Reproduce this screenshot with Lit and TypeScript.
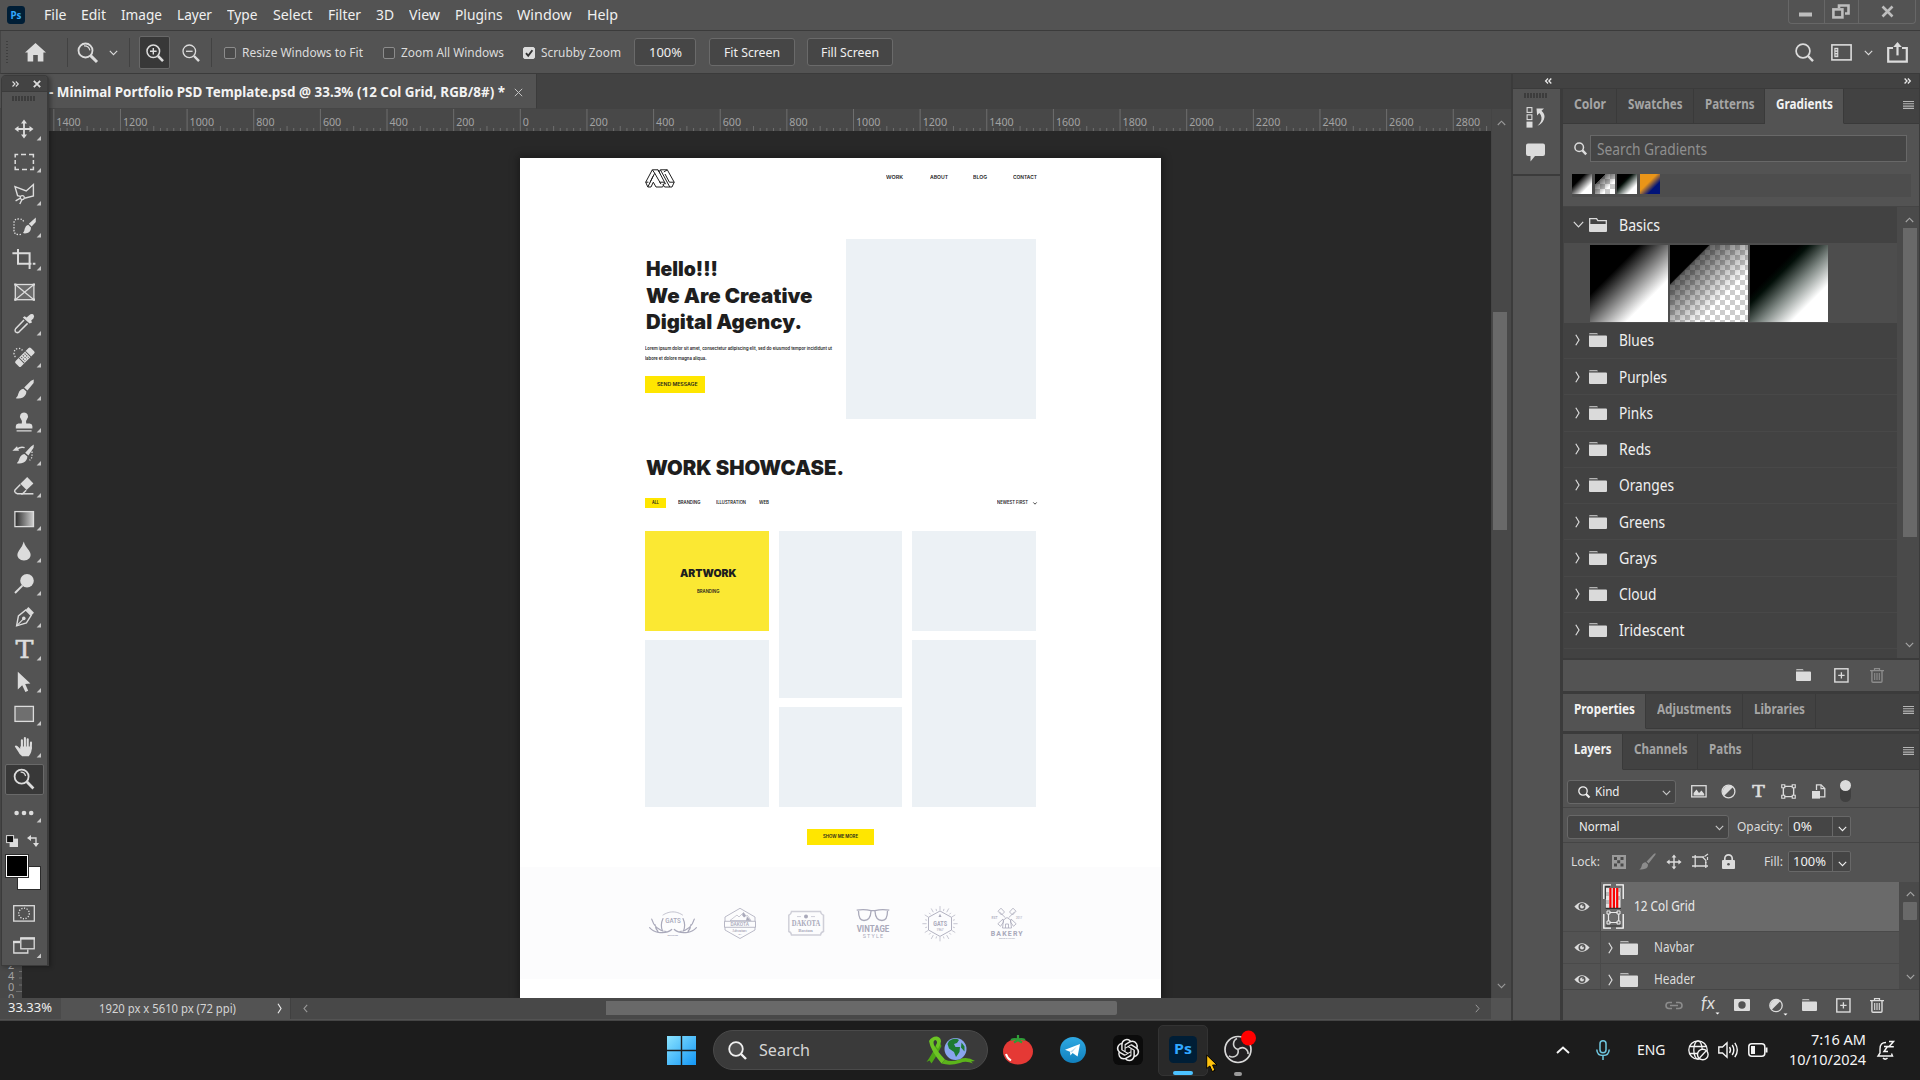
import { LitElement, html, css, svg } from "lit";
import { customElement, property } from "lit/decorators.js";

/* ---------- helpers ---------- */

const ico = (w: number, h: number, body: unknown, cls = "") =>
  html`<svg class=${cls} width=${w} height=${h} viewBox="0 0 ${w} ${h}" fill="none" stroke="currentColor">${body}</svg>`;

const t = (w: number, s: string, cls = "") =>
  html`<fit-text class=${cls} .w=${w}>${s}</fit-text>`;

const base = css`
  :host { display: block; box-sizing: border-box; font-family: "Noto Sans", "Open Sans", sans-serif; line-height: 1; color: #e8e8e8; }
  * { box-sizing: border-box; }
  svg { display: block; flex: none; overflow: visible; }
  .b { font-weight: 700; }
`;

/* Text squeezed or stretched to an exact width. */
@customElement("fit-text")
export class FitText extends LitElement {
  @property({ type: Number }) w = 0;
  static styles = css`
    :host { display: block; white-space: nowrap; flex: none; line-height: 1.3; }
    span { display: inline-block; transform-origin: 0 50%; vertical-align: top; }
  `;
  updated() {
    const s = this.renderRoot.querySelector("span") as HTMLElement;
    s.style.transform = "none";
    const n = s.getBoundingClientRect().width;
    this.style.width = `${this.w}px`;
    if (n > 0) s.style.transform = `scaleX(${this.w / n})`;
  }
  render() {
    return html`<span><slot></slot></span>`;
  }
}

/* ---------- shared icons ---------- */

const chevDown = () => ico(9, 6, svg`<path d="M.8 .8L4.5 4.6 8.2 .8" stroke-width="1.1"/>`);
const chevUp = () => ico(9, 6, svg`<path d="M.8 5L4.5 1.2 8.2 5" stroke-width="1.1"/>`);
const chevRight = () => ico(5, 12, svg`<path d="M.8 .8L4 6 .8 11.2" stroke-width="1.2"/>`);
const chevLeft = () => ico(5, 9, svg`<path d="M4.2 .8L1 4.5 4.2 8.2" stroke-width="1.1"/>`);
const folder = (w = 18, h = 14) =>
  ico(w, h, svg`<path d="M0 1.2Q0 .2 1 .2H${w * 0.45}l1 1H0z M0 ${2.6}H${w - 1}q1 0 1 1V${h - 1}q0 1-1 1H1q-1 0-1-1z" fill="currentColor" stroke="none"/>`);
const menuIcon = () => ico(11, 8, svg`<path d="M0 .5H11M0 2.8H11M0 5.1H11M0 7.4H11" stroke-width="1.1"/>`, "menu");
const plusBox = () => ico(15, 15, svg`<rect x=".8" y=".8" width="13.2" height="13.2" stroke-width="1.4"/><path d="M7.4 4.2v6.4M4.2 7.4h6.4" stroke-width="1.3"/>`);
const trash = (cls = "") => ico(14, 15, svg`<path d="M0 2.6H14M4.5 2.4V.7H9.5V2.4" stroke-width="1.2"/><path d="M1.9 3V13.2q0 1 1 1H11q1 0 1-1V3" stroke-width="1.4"/><path d="M4.7 5v7M7 5v7M9.3 5v7" stroke-width="1.1"/>`, cls);
const half = () => ico(15, 15, svg`<circle cx="7.5" cy="7.5" r="6.4" stroke-width="1.3"/><path d="M12 3A6.4 6.4 0 0 0 3 12z" fill="currentColor" stroke="none"/>`);
const moveIcon = (s: number) => html`<svg width=${s} height=${s} viewBox="2 2 20 20"><path fill="currentColor" stroke="none" d="M12 2.5l3 4h-2.1v4.6h4.6V9l4 3-4 3v-2.1h-4.6v4.6H15l-3 4-3-4h2.1v-4.6H6.5V15l-4-3 4-3v2.1h4.6V6.5H9z"/></svg>`;
const frameIcon = (s: number) => html`<svg width=${s} height=${s} viewBox="0 0 14 14" fill="none" stroke="currentColor"><path d="M2.2 3.6v6.8M11.8 3.6v6.8M3.6 2.2h6.8M3.6 11.8h6.8" stroke-width="1.3"/><path stroke-width="1.1" d="M.7.7h2.8v2.8H.7zM10.5.7h2.8v2.8h-2.8zM.7 10.5h2.8v2.8H.7zM10.5 10.5h2.8v2.8h-2.8z"/></svg>`;
const smallBrush = () => ico(17, 17, svg`<path d="M16.4.2Q17 .8 16.2 2L9.6 10.6 7.6 8.6 14.8 1Q15.8 0 16.4.2z M6.8 9.2l2.2 2.2Q9.2 14.6 6 15.8 3.4 16.8.4 16.4 2.6 15 2.8 12.6 3.2 9.6 6.8 9.2z" fill="currentColor" stroke="none"/>`);

/* ---------- menu bar ---------- */

@customElement("menu-bar")
export class MenuBar extends LitElement {
  static styles = [base, css`
    :host { display: flex; height: 31px; background: #535353; border-bottom: 1px solid #3b3b3b; align-items: flex-start; justify-content: space-between; padding-left: 7px; }
    .left { display: flex; align-items: center; height: 30px; font-size: 15px; }
    .items { display: flex; gap: 15.1px; margin-left: 18.5px; color: #f0f0f0; }
    .win { display: grid; grid-template-columns: 35px 34px 59px; width: 128px; height: 24px; margin-right: 4px; border: 1px solid #676767; border-top: 0; border-radius: 0 0 4px 4px; color: #bdbdbd; }
    .win > div { display: flex; align-items: center; justify-content: center; border-left: 1px solid #676767; }
    .win > div:first-child { border-left: 0; }
    .win svg { margin-left: -2px; }
  `];
  render() {
    const items: [string, number][] = [["File", 22.5], ["Edit", 25], ["Image", 41], ["Layer", 35], ["Type", 30.5], ["Select", 39.5], ["Filter", 33], ["3D", 18], ["View", 31], ["Plugins", 47.5], ["Window", 54.5], ["Help", 31]];
    return html`
      <div class="left">
        ${ico(18, 18, svg`<rect width="18" height="18" rx="3.4" fill="#001e36" stroke="none"/><text x="9" y="12.6" text-anchor="middle" font-size="10" font-weight="700" textLength="11" lengthAdjust="spacingAndGlyphs" fill="#31a8ff" stroke="none">Ps</text>`)}
        <div class="items">${items.map(([s, w]) => t(w, s))}</div>
      </div>
      <div class="win">
        <div>${ico(13, 4, svg`<rect width="13" height="4" fill="currentColor" stroke="none" y="2.5"/>`)}</div>
        <div>${ico(18, 15, svg`<path d="M7 4V1.5H16.5V9.5H13" stroke-width="2.6"/><rect x="1.4" y="5.4" width="9" height="8" stroke-width="2.6"/>`)}</div>
        <div>${ico(13, 11, svg`<path d="M1.5 .5L11.5 10.5M11.5 .5L1.5 10.5" stroke-width="2.6"/>`)}</div>
      </div>`;
  }
}

/* ---------- options bar ---------- */

@customElement("options-bar")
export class OptionsBar extends LitElement {
  static styles = [base, css`
    :host { display: flex; justify-content: space-between; height: 43px; background: #535353; border-bottom: 1px solid #3b3b3b; border-left: 1px solid #454545; font-size: 13px; color: #dcdcdc; }
    .row { display: grid; align-items: center; justify-items: start; height: 42px; padding-top: 1px; }
    .l { padding-left: 5px; grid-template-columns: 19px 42px 10px 32px 20px 11px 42px 29px 13px 18px 141px 18px 122px 18px 93px 75px 98px 90px; }
    .r { grid-template-columns: 36px 33px 23px 33px; }
    .grip { width: 2px; height: 24px; background: repeating-linear-gradient(#3f3f3f 0 1px, #535353 1px 3px); }
    .sep { width: 1px; height: 29px; background: #424242; }
    .on { width: 31px; height: 33px; margin-left: -1px; background: #383838; border: 1px solid #686868; border-radius: 2px; display: flex; align-items: center; justify-content: center; }
    .cb { width: 12px; height: 12px; border: 1px solid #8c8c8c; border-radius: 2px; background: #4a4a4a; }
    .cb.c { background: #dcdcdc; border-color: #dcdcdc; color: #333; }
    .btn { height: 28px; border: 1px solid #6a6a6a; border-radius: 3px; background: #464646; display: flex; align-items: center; justify-content: center; color: #f0f0f0; margin-top: -1px; }
    .w1 { width: 62px; } .w2 { width: 86px; } .w3 { width: 86px; }
  `];
  render() {
    return html`
      <div class="row l">
        <div class="grip"></div>
        ${ico(21, 19, svg`<path d="M10.5 0L21 9.6H18.4V18.4H12.8V12H8.2V18.4H2.6V9.6H0z" fill="currentColor" stroke="none"/>`)}
        <div class="sep"></div>
        ${ico(21, 21, svg`<circle cx="8.5" cy="8.5" r="7" stroke-width="1.8"/><path d="M13.6 13.6L20 20" stroke-width="3"/><path d="M7 3.9Q11.8 3.6 12.9 8.3" stroke-width="1.2"/>`)}
        ${chevDown()}
        <div class="sep"></div>
        <div class="on">${ico(18, 18, svg`<circle cx="7.3" cy="7.3" r="6.3" stroke-width="1.5"/><path d="M12 12L17 17.2" stroke-width="2.6"/><path d="M7.3 4v6.6M4 7.3h6.6" stroke-width="1.4"/>`)}</div>
        ${ico(18, 18, svg`<circle cx="7.3" cy="7.3" r="6.3" stroke-width="1.3"/><path d="M12 12L17 17.2" stroke-width="2.4"/><path d="M4 7.3h6.6" stroke-width="1.3"/>`)}
        <div class="sep"></div>
        <div class="cb"></div>${t(121, "Resize Windows to Fit")}
        <div class="cb"></div>${t(103, "Zoom All Windows")}
        <div class="cb c">${ico(10, 10, svg`<path d="M2 5.2L4.2 7.8 8.4 2.2" stroke-width="1.9"/>`)}</div>${t(80, "Scrubby Zoom")}
        <div class="btn w1">${t(33, "100%")}</div>
        <div class="btn w2">${t(56, "Fit Screen")}</div>
        <div class="btn w3">${t(58, "Fill Screen")}</div>
      </div>
      <div class="row r">
        ${ico(19, 19, svg`<circle cx="8" cy="8" r="6.9" stroke-width="1.7"/><path d="M13 13L18 18.2" stroke-width="2.4"/>`)}
        ${ico(21, 17, svg`<rect x=".9" y=".9" width="19.2" height="15" stroke-width="1.6"/><rect x="3.3" y="3.8" width="4" height="9.4" fill="currentColor" stroke="none"/><path d="M4.4 5.8h1.8M4.4 8.4h1.8M4.4 11h1.8" stroke="#535353"/>`)}
        ${chevDown()}
        ${ico(21, 21, svg`<path d="M6 6H1.2V19.6H19.8V6H15" stroke-width="2.2"/><path d="M10.5 13.4V4" stroke-width="2.2"/><path d="M10.5 0L14.8 5H6.2z" fill="currentColor" stroke="none"/>`)}
      </div>`;
  }
}

/* ---------- floating toolbox ---------- */

const fillP = (d: string) => svg`<path d=${d} fill="currentColor" stroke="none"/>`;
const tools: unknown[] = [
  fillP("M12 2.5l3 4h-2.1v4.6h4.6V9l4 3-4 3v-2.1h-4.6v4.6H15l-3 4-3-4h2.1v-4.6H6.5V15l-4-3 4-3v2.1h4.6V6.5H9z"),
  svg`<path d="M3.2 7.5V4.5H6.2M9 4.5h5M17 4.5h4.4V7.5M21.4 10v4M21.4 16.5v3H18M15 19.5h-5M7 19.5H3.2V16.5M3.2 14v-4" stroke-width="1.5"/>`,
  svg`<path d="M8.4 14.4L5.6 13.6 3 4.6 14.2 9 21.4 2.6V14L12.4 16.2" stroke-width="1.4"/><circle cx="10.3" cy="15.6" r="2" stroke-width="1.2"/><path d="M8.4 16.2L3.6 18.8M9.9 17.8L7.8 22" stroke-width="1.4"/>`,
  svg`<path d="M11.5 6.5Q11 3.9 7 3.9 2 3.9 2 8V15.5Q2 19.4 7 19.6L9 19.4" stroke-width="1.3" stroke-dasharray="1.4 1.4"/>${fillP("M23.8 2.4V7L19.6 11.4 16.8 8.8zM16.2 9.8l2.8 2.7Q19 16.6 15.4 18 12.6 18.8 11 18 12.4 16.6 12.8 13.6 13.6 10.4 16.2 9.8z")}`,
  svg`<path d="M.4 6.2H17.6V22M6 2V16.8H19.4M20.8 16.8h2.6" stroke-width="2"/>`,
  svg`<rect x="3.3" y="4.5" width="18.6" height="15.2" fill="#6b6b6b" stroke-width="1.3"/><path d="M3.3 4.5L21.9 19.7M21.9 4.5L3.3 19.7" stroke-width="1.3"/>${fillP("M2.2 3.4h2.2v2.2H2.2zM20.8 3.4H23v2.2h-2.2zM2.2 18.6h2.2v2.2H2.2zM20.8 18.6H23v2.2h-2.2z")}`,
  svg`${fillP("M17.2 3.2Q19 1.4 21.2 2.2 23 4 21.4 6.4L19.2 8.6 20 10.4 17.6 11.6 10.8 5.4 12.6 4.2 14.6 5.4z")}<path d="M12 8L3.8 16.4Q2.4 18.2 3.4 19.8 5.2 21.4 7.2 19.8L15.6 11.4" stroke-width="1.5"/>`,
  svg`<path d="M10.5 5.4Q9 3.2 6 3.4 2.2 4 2 8.4 2 11 4 12.4" stroke-width="1.3" stroke-dasharray="1.3 1.6"/><g transform="rotate(-45 12.8 12.2)"><rect x="2" y="8.4" width="21.6" height="7.8" rx="1.6" fill="currentColor" stroke="none"/><path d="M8.2 8.4v7.8M17.4 8.4v7.8" stroke="#535353"/><path d="M10.4 9.5v5.6M12.8 9.5v5.6M15.2 9.5v5.6" stroke="#535353" stroke-dasharray="1.4 1"/></g>`,
  fillP("M21.8 2.4L21.6 6 15.4 13.6 12.2 10.6 19 3.8zM11.4 11.8l3 2.8Q14.2 18.8 11 20.4 7.4 22 3.8 21.2 6 19.4 6.4 16.4 7.8 12.4 11.4 11.8z"),
  fillP("M12 2.4a4 4 0 0 1 3.2 6.4Q13.6 10.6 14.2 13.6H17.6Q20.2 14 20.4 16V18.6H3.8V16Q4 14 6.4 13.6H9.8Q10.4 10.6 8.8 8.8A4 4 0 0 1 12 2.4zM4.6 20.2H19.6V21.6H4.6z"),
  svg`${fillP("M21.8 2.4L21.6 5.8 16.4 13.4 13.2 10.8 19 4.4zM12.4 12l3 2.6Q15.2 18.8 11.6 20.6 8 22 4.8 21.2 6.8 19.4 7.4 16.4 8.8 12.6 12.4 12zM.4 8.8L5 4.2 7 8.8z")}<path d="M5.4 7Q8.4 4.4 12.6 5.6" stroke-width="1.5"/><path d="M20 9.6V15.4L17.6 18.4" stroke-width="1.3" stroke-dasharray="1.3 1.6"/>`,
  svg`${fillP("M15.2 2L21.4 8.6 14.6 15 8.4 8.8z")}<path d="M8.4 9.4L3 15Q2 16.4 3.4 17.6L5.4 18.8H10.6L14.2 15.2" stroke-width="1.4"/><path d="M9 18.8H21.4" stroke-width="1.5"/>`,
  svg`<rect x="2.9" y="4.6" width="18.6" height="15" fill="url(#gt)" stroke-width="1.3"/>`,
  fillP("M11.8 1.6Q12.6 5.6 17 10.4 20 15 17.4 18.2 15.2 20.6 12 20.6 8.8 20.6 6.6 18.2 4 15 7 10.4 11 5.6 11.8 1.6z"),
  svg`<circle cx="15" cy="8.8" r="6.8" fill="currentColor" stroke="none"/><path d="M10.4 13.6L3 21" stroke-width="2"/>`,
  svg`<path d="M4.6 20.8L6.4 11 13.8 5 19.2 10.4 14.4 17.8z" stroke-width="1.4"/><circle cx="11.8" cy="13.4" r="1.8" fill="currentColor" stroke="none"/><path d="M4.6 20.8L11 14.4" stroke-width="1.2"/>${fillP("M14 4.4L16.4 2 22 7.8 19.6 10.2z")}`,
  svg`<text x="12.4" y="20.8" font-family="DejaVu Serif, serif" font-size="24" text-anchor="middle" textLength="18" lengthAdjust="spacingAndGlyphs" fill="currentColor" stroke="currentColor" stroke-width=".5">T</text>`,
  fillP("M5.8 1.8L18.4 13.6 13.2 14 16.2 20.8 13.4 22 10.2 15.2 5.8 19.4z"),
  svg`<rect x="3" y="4.4" width="18.4" height="15" fill="#6f6f6f" stroke-width="1.3"/>`,
  svg`${fillP("M8.2 11.5H19.8Q20.2 17 16.8 21.2H10.2Q7.4 19.600 5.800 16L2.800 11.400Q3.600 9.800 5.600 11.200L8.200 13.800z")}<path d="M9.900 13V5.200M12.900 12V3M15.700 12V4.200M18.700 13.500L19 7.600" stroke-width="2.100" stroke-linecap="round"/>`,
  svg`<circle cx="9.6" cy="9.6" r="7" stroke-width="1.8"/><path d="M14.8 14.8L21.4 21.4" stroke-width="2.8"/><path d="M8.6 5.2Q12.6 5 13.6 9" stroke-width="1.2"/>`,
  svg`<g fill="currentColor" stroke="none"><circle cx="4.6" cy="13" r="2.3"/><circle cx="12" cy="13" r="2.3"/><circle cx="19.2" cy="13" r="2.3"/></g>`,
];

@customElement("tool-box")
export class ToolBox extends LitElement {
  static styles = [base, css`
    :host { width: 48px; height: 891px; background: #535353; border: 1px solid #3b3b3b; border-right-width: 2px; border-radius: 5px 5px 0 0; box-shadow: 2px 1px 4px rgba(0,0,0,.3); color: #dcdcdc; overflow: hidden; }
    .head { height: 16px; background: #434343; border-bottom: 1px solid #3b3b3b; display: flex; align-items: center; justify-content: space-between; padding: 0 6px 0 10px; }
    .grip { width: 24px; height: 5px; margin: 4px 0 12px 10px; background: repeating-linear-gradient(90deg, #3c3c3c 0 2px, #535353 2px 3px); }
    .tool { height: 32.5px; display: flex; align-items: center; margin: 0 3px 0 3px; padding-left: 7px; }
    .tool.on { background: #383838; border: 1px solid #696969; border-radius: 2px; height: 31px; margin-top: .5px; margin-bottom: 1px; padding-left: 6px; }
    .tri { align-self: flex-end; margin-bottom: 5px; color: #c8c8c8; }
    .mini { display: flex; justify-content: space-between; margin: 7px 8px 0 4px; height: 13px; }
    .colors { margin: 6px 0 0 3px; }
    .modes { display: flex; flex-direction: column; gap: 15px; margin: 15px 0 0 11px; }
  `];
  render() {
    return html`
      <div class="head">
        ${ico(7, 6, svg`<path d="M.5 .5L3 3 .5 5.5M3.8 .5L6.3 3 3.8 5.5" stroke-width="1.1"/>`)}
        ${ico(8, 8, svg`<path d="M.8 .8L7.2 7.2M7.2 .8L.8 7.2" stroke-width="1.8"/>`)}
      </div>
      <div class="grip"></div>
      ${tools.map((b, i) => html`
        <div class="tool ${i === 20 ? "on" : ""}">
          ${ico(24, 24, svg`${i === 12 ? svg`<defs><linearGradient id="gt"><stop stop-color="#2a2a2a"/><stop offset="1" stop-color="#cfcfcf"/></linearGradient></defs>` : ""}${b}`)}
          ${i === 5 || i === 20 ? "" : ico(5, 5, svg`<path d="M5 0V4.4H.6z" fill="currentColor" stroke="none"/>`, "tri")}
        </div>`)}
      <div class="mini">
        ${ico(12, 12, svg`<rect x="3.6" y="3.6" width="8.4" height="8.4" fill="currentColor" stroke="none"/><rect x=".6" y=".6" width="7" height="7" fill="#111" stroke-width="1"/>`)}
        ${ico(12, 12, svg`<path d="M3 3H9V9" stroke-width="1.3"/><path d="M0 3L4 0V6zM9 12L6 8H12z" fill="currentColor" stroke="none"/>`)}
      </div>
      ${ico(36, 36, svg`<rect x="12.5" y="12.5" width="23" height="23" fill="#fff" stroke="#2c2c2c"/><rect x=".5" y=".5" width="23" height="23" fill="#fff" stroke="#2c2c2c"/><rect x="2" y="2" width="20" height="20" fill="#000" stroke="none"/>`, "colors")}
      <div class="modes">
        ${ico(22, 17, svg`<rect x=".7" y=".7" width="20.6" height="15.4" stroke-width="1.3"/><circle cx="11" cy="8.4" r="5.3" stroke-width="1.4" stroke-dasharray="1.2 1.5"/>`)}
        ${ico(22, 17, svg`<path d="M7 4.6H.8V16H14.8V12.4" stroke-width="1.3"/><path d="M0 5h7" stroke-width="2.4"/><rect x="7.8" y="1.4" width="13.4" height="10.4" stroke-width="1.3"/><path d="M7.2 1.4H22" stroke-width="2.4"/><path d="M28 16.500v4.400h-4.400z" fill="#c8c8c8" stroke="none"/>`)}
      </div>`;
  }
}

/* ---------- the web page shown on the canvas ---------- */

@customElement("art-board")
export class ArtBoard extends LitElement {
  static styles = [base, css`
    :host { width: 641px; height: 840px; background: #fff; color: #1e1e1e; font-family: Inter, "Noto Sans", sans-serif; box-shadow: 0 0 8px 2px rgba(0,0,0,.35); overflow: hidden; }
    .col { width: 391px; margin-left: 125px; }
    header { height: 81px; padding-top: 11px; display: flex; justify-content: space-between; }
    nav { display: grid; grid-template-columns: 44px 43px 40px 24px; font-size: 5.4px; font-weight: 600; padding-top: 4.5px; margin-right: -1px; }
    .hero { display: grid; grid-template-columns: 200.5px 190.5px; height: 180px; }
    .g { background: #ecf1f5; }
    .copy { padding-top: 16.5px; }
    .h { height: 26.7px; display: flex; align-items: center; font-size: 20px; font-weight: 900; padding-left: 1px; }
    .p { height: 10px; display: flex; align-items: center; font-size: 4.3px; font-weight: 600; }
    .p.f { margin-top: 8px; }
    .btn { background: #ffe600; display: flex; align-items: center; justify-content: center; font-size: 4.8px; font-weight: 600; height: 16.5px; padding-bottom: 1px; }
    .send { width: 60px; margin-top: 12.5px; padding-left: 4px; }
    .title { margin-top: 39px; height: 20px; }
    .filters { margin-top: 20px; height: 10px; display: grid; grid-template-columns: 32.5px 38px 43px 238px 36px auto; align-items: center; font-size: 4.2px; font-weight: 600; }
    .filters > fit-text { margin-top: -1.5px; }
    .all { background: #ffe600; width: 20.5px; height: 10px; display: flex; align-items: center; justify-content: center; padding: 0 0 1px 1px; }
    .works { margin-top: 22.5px; height: 276.5px; display: grid; grid-template-columns: 123.5px 123.5px 124px; column-gap: 10px; }
    .stack { display: grid; row-gap: 9px; }
    .a { grid-template-rows: 100.5px 167px; } .c { grid-template-rows: 167px 100.5px; }
    .y { background: #fbe833; display: flex; flex-direction: column; align-items: center; padding-top: 36.5px; padding-left: 2px; }
    .aw { font-size: 10.5px; font-weight: 900; }
    .br { font-size: 4.2px; font-weight: 600; margin-top: 8px; }
    .more { width: 67px; margin: 21.5px auto 0 161.5px; font-size: 4.2px; }
    .band { margin-top: 22px; height: 112px; background: #fcfcfd; display: flex; align-items: center; padding: 0 0 0 129px; color: #a9a9ba; }
  `];
  render() {
    const rays = Array.from({ length: 24 }, (_, i) => {
      const a = (i * Math.PI) / 12, o = i % 2 ? 15.3 : 17.6;
      return svg`<path d="M${291 + 13.4 * Math.cos(a)} ${18.7 + 13.2 * Math.sin(a)}L${291 + o * Math.cos(a)} ${18.7 + o * Math.sin(a)}"/>`;
    });
    const txt = (x: number, y: number, w: number, s: number, v: string, f = "Roboto, sans-serif", wt = 700) =>
      svg`<text x=${x} y=${y} font-size=${s} font-family=${f} font-weight=${wt} textLength=${w} lengthAdjust="spacingAndGlyphs" fill="currentColor" stroke="none">${v}</text>`;
    return html`
      <div class="col">
        <header>
          ${ico(30, 19, svg`<g stroke-width="1" stroke="#1e1e1e" stroke-linejoin="round"><path d="M.7 13.200L7.300 .8H13L15 4.400M.7 13.200L2.800 18H6L8.300 13.200 11 18H17.600L19.600 13.600"/><path d="M2.800 18L9.700 4.200 16 15.200M7.300 .8L9.700 4.200M5 13.400L8 7.200M13 .8L20.600 15.200M.7 13.200H3.400M14.400 13.200H19.400"/><path d="M14.200 2.600L15.400 .8H22.300L29.200 13.200 27 18H19.600L17.800 15.200M15.400 .8L24.800 18M20 5L24.400 13.200H29.200M22.300 .8L18.800 3"/></g>`)}
          <nav>${t(17, "WORK")}${t(18, "ABOUT")}${t(14, "BLOG")}${t(24, "CONTACT")}</nav>
        </header>
        <div class="hero">
          <div class="copy">
            <div class="h">${t(72, "Hello!!!")}</div>
            <div class="h">${t(166.5, "We Are Creative")}</div>
            <div class="h">${t(156, "Digital Agency.")}</div>
            <div class="p f">${t(187, "Lorem ipsum dolor sit amet, consectetur adipiscing elit, sed do eiusmod tempor incididunt ut")}</div>
            <div class="p">${t(61.5, "labore et dolore magna aliqua.")}</div>
            <div class="btn send">${t(40.5, "SEND MESSAGE")}</div>
          </div>
          <div class="g"></div>
        </div>
        <div class="h title">${t(198, "WORK SHOWCASE.")}</div>
        <div class="filters">
          <div class="all">${t(7, "ALL")}</div>
          ${t(22.5, "BRANDING")}${t(30, "ILLUSTRATION")}${t(10, "WEB")}${t(31, "NEWEST FIRST")}
          ${ico(4, 3, svg`<path d="M.3 .4L2 2.2 3.7 .4" stroke-width=".8"/>`)}
        </div>
        <div class="works">
          <div class="stack a"><div class="y">${t(56.5, "ARTWORK", "aw")}${t(22.5, "BRANDING", "br")}</div><div class="g"></div></div>
          <div class="stack c"><div class="g"></div><div class="g"></div></div>
          <div class="stack a"><div class="g"></div><div class="g"></div></div>
        </div>
        <div class="btn more">${t(35, "SHOW ME MORE")}</div>
      </div>
      <div class="band">
        ${ico(376, 36, svg`
          <g stroke-width="1.200" stroke-linecap="round"><path d="M22.700 24.500Q18 28.600 9.300 27.300 4 26.500 .6 22.600M17 26.500Q6 25.500 2.700 14.200M13.500 26Q11 20 14 13.500M9 26.500Q6.500 24 6 19.500"/><path d="M25.300 24.500Q30 28.600 38.700 27.300 44 26.500 47.400 22.600M31 26.500Q42 25.500 45.300 14.200M34.500 26Q37 20 34 13.500M39 26.500Q41.500 24 42 19.500"/><path d="M14 10Q24 3.800 33.500 10" stroke-width="1" stroke-dasharray="1 .7" opacity=".7"/></g>
          ${txt(16.2, 18, 15.5, 7.8, "GATS", "Roboto, sans-serif", 500)}${txt(18.5, 31, 10.5, 2.4, "MUSEUM")}
          <g stroke-width=".8"><path d="M91 3.300L106 12V25L91 33.500 76 25V12z"/><path d="M75.500 16.300H106.500V22.300H75.500z" fill="#fcfcfd"/><path d="M81 15.500L88 10 90 12 94.500 7.500 97 11 98.500 10.500 102 15.500z" stroke-width=".6"/><path d="M94.500 7.500L97 11 95 12.500 93 10zM98 11.500L101.500 15.500H97z" fill="currentColor" stroke="none"/></g>
          ${txt(81.5, 21.3, 18.5, 5.2, "DAKOTA", "Roboto, sans-serif", 500)}${txt(83, 26.8, 15, 3.8, "Adventure", "Liberation Serif, serif", 700)}${txt(89.5, 30.3, 3, 2.4, "01")}
          <path d="M142.500 6.600H171.500Q172 9.500 174.500 10.200V26.500Q172 27 171.500 30H142.500Q142 27 139.800 26.500V10.200Q142 9.500 142.500 6.600z" stroke-width="1.500" opacity=".55"/><circle cx="157" cy="11.600" r="2" fill="currentColor" stroke="none"/><path d="M148 11.600h4M162 11.600h4" stroke-width=".8" opacity=".7"/>
          ${txt(142.7, 20.5, 28.6, 7.4, "DAKOTA", "Liberation Serif, serif")}${txt(149.3, 27, 14.4, 5, "Boston", "Liberation Serif, serif")}
          <path d="M207.700 5.200Q215 3.800 222 5.600H226Q233 3.800 240.300 5.200M209.500 6Q209.500 15.500 215 15.500 221.500 15.500 222 6.300M226 6.300Q226.500 15.500 233 15.500 238.500 15.500 238.500 6" stroke-width="1.300"/>
          ${txt(207.7, 27.2, 32.6, 9.8, "VINTAGE")}
          <text x="213.700" y="33.200" font-size="5.400" font-family="Roboto, sans-serif" textLength="20.500" fill="currentColor" stroke="none">STYLE</text>
          <g stroke-width=".8" opacity=".8">${rays}</g><path d="M291 6L302.500 12.300V25L291 31.400 279.500 25V12.300z" stroke-width=".9"/>
          ${txt(284.3, 21.2, 13.7, 8, "GATS")}${txt(287.500, 26, 7, 3, "1967", "Roboto, sans-serif", 500)}<path d="M291 8.800l1.500 3.200h-3z" fill="currentColor" stroke="none"/>
          <g stroke-width=".8"><path d="M353.500 23L354.500 15 358 12.500 361.500 15 362.500 23zM356.500 23V19H359.500V23"/><path d="M356.500 12.800L350.500 7M359.500 12.800L365.500 7M349 6.200L352 3.200 355.500 7 352.500 10zM367 6.200L364 3.200 360.500 7 363.500 10zM348.800 18.800L354 14 354.500 17 351.500 21.300zM367.200 18.800L362 14 361.500 17 364.500 21.300z"/></g>
          ${txt(342.5, 13.7, 6, 3, "EST", "Roboto, sans-serif", 500)}${txt(367, 13.7, 6, 3, "2017", "Roboto, sans-serif", 500)}
          <text x="341.700" y="31.200" font-size="7" font-weight="700" font-family="Roboto, sans-serif" textLength="32" fill="currentColor" stroke="none">BAKERY</text>
          ${txt(350, 34.4, 16, 1.8, "BREAD & PASTRY")}
        `)}
      </div>`;
  }
}

/* ---------- document window ---------- */

@customElement("doc-area")
export class DocArea extends LitElement {
  static styles = [base, css`
    :host { width: 1511px; height: 947px; display: flex; flex-direction: column; background: #535353; }
    .tabs { height: 35px; background: #424242; flex: none; }
    .tab { width: 537px; height: 35px; background: #535353; border-right: 1px solid #3b3b3b; border-bottom: 1px solid #464646; display: flex; align-items: center; padding: 2px 0 0 49px; gap: 9px; font-size: 14px; font-weight: 700; color: #f2f2f2; }
    .tab svg { color: #c4c4c4; }
    .main { display: grid; grid-template-columns: 1491px 20px; height: 889px; flex: none; }
    .ruler { height: 22px; background: #484848; color: #6e6e6e; }
    .ruler text { fill: #a2a2a2; font-size: 11.5px; stroke: none; }
    .canvas { height: 867px; background: #282828; display: flex; justify-content: flex-start; align-items: flex-end; overflow: hidden; }
    .vr { width: 22px; height: 867px; background: #484848; color: #6e6e6e; margin-right: 498px; display: flex; flex-direction: column; align-items: flex-end; padding: 834px 0 0; position: relative; overflow: hidden; }
    .digits { position: absolute; left: 8px; top: 828px; font-size: 11px; line-height: 11px; width: 8px; color: #a2a2a2; word-break: break-all; }
    .vs { background: #484848; display: flex; flex-direction: column; align-items: center; padding: 11px 1px 9px 0; color: #9a9a9a; border-left: 1px solid #444; }
    .vs .thumb { width: 14px; height: 218px; background: #696969; margin: 186px 3px auto 0; }
    .status { display: grid; grid-template-columns: 61px 216px 13px 13px 303px 511px auto; height: 23px; align-items: start; font-size: 13px; border-bottom: 1px solid #454545; flex: none; }
    .status > * { height: 21px; display: flex; align-items: center; }
    .z { background: #4a4a4a; padding: 0 0 3px 8px; color: #f0f0f0; }
    .i { padding-left: 38px; color: #d5d5d5; }
    .k, .k2, .k3 { background: #484848; color: #9a9a9a; }
    .k { border-left: 1px solid #404040; }
    .ht { background: #484848; } .ht div { background: #696969; width: 511px; height: 14px; border-radius: 0 2px 2px 0; margin-bottom: 1px; }
    .k3 { padding-left: 358px; margin-right: 20px; }
  `];
  render() {
    const marks = [];
    for (let k = -7; k <= 14; k++) {
      const x = 520.3 + k * 66.64;
      marks.push(svg`<path d="M${x} 0V22"/>${Array.from({ length: 9 }, (_, i) => svg`<path d="M${x + (i + 1) * 6.664} ${i === 4 ? 17 : 19}V22"/>`)}
        <text x=${x + 2.5} y="16.500" textLength=${String(Math.abs(k * 200)).length * 6.1} lengthAdjust="spacingAndGlyphs">${Math.abs(k * 200)}</text>`);
    }
    return html`
      <div class="tabs"><div class="tab">
        ${t(456, "- Minimal Portfolio PSD Template.psd @ 33.3% (12 Col Grid, RGB/8#) *")}
        ${ico(9, 9, svg`<path d="M.8 .8L8.200 8.200M8.200 .8L.8 8.200"/>`)}
      </div></div>
      <div class="main">
        <div>
          <div class="ruler">${ico(1491, 22, svg`<svg width="1491" height="22" overflow="hidden">${marks}</svg>`)}</div>
          <div class="canvas">
            <div class="vr">${ico(6, 30, svg`<path d="M3 6.500h3M3 13h3M3 20h3M0 26.500h6"/>`)}<div class="digits">2400</div></div>
            <art-board></art-board>
          </div>
        </div>
        <div class="vs">${chevUp()}<div class="thumb"></div>${chevDown()}</div>
      </div>
      <div class="status">
        <div class="z">${t(44, "33.33%")}</div>
        <div class="i">${t(137, "1920 px x 5610 px (72 ppi)")}</div>
        <div>${ico(5, 11, svg`<path d="M1 .8L4 5.500 1 10.200" stroke-width="1.200"/>`)}</div>
        <div class="k"></div>
        <div class="k2">${chevLeft()}</div>
        <div class="ht"><div></div></div>
        <div class="k3">${ico(5, 9, svg`<path d="M.8 .8L4 4.500 .8 8.200"/>`)}</div>
      </div>`;
  }
}

/* ---------- dock with the panels ---------- */

@customElement("side-dock")
export class SideDock extends LitElement {
  static styles = [base, css`
    :host { width: 409px; height: 947px; background: #3b3b3b; padding: 0 1px 1px 2px; display: flex; flex-direction: column; }
    .top { height: 14px; background: #424242; display: flex; justify-content: space-between; align-items: center; padding: 0 8px 1px 32px; flex: none; }
    .body { display: flex; gap: 3px; padding-top: 1px; flex: 1; }
    .strip { width: 47px; display: flex; flex-direction: column; gap: 2px; color: #dcdcdc; }
    .icons { height: 85px; background: #535353; padding: 4px 0 0 11px; }
    .icons svg + svg { margin-top: 15px; }
    .grip { width: 24px; height: 5px; margin-bottom: 9px; background: repeating-linear-gradient(90deg, #3c3c3c 0 2px, #535353 2px 3px); }
    .rest { flex: 1; background: #535353; }
    .panels { width: 356px; display: flex; flex-direction: column; }
    .panels > * { flex: none; }
    .tabs { display: flex; height: 35px; background: #424242; font-size: 14px; font-weight: 700; color: #a5a5a5; }
    .tabs > div { border-right: 1px solid #3a3a3a; border-bottom: 1px solid #3a3a3a; display: flex; align-items: center; padding: 0 10px 4px 11px; }
    .tabs > div.on { background: #535353; color: #f2f2f2; border-bottom-color: #535353; }
    .tabs .fill { flex: 1; justify-content: flex-end; padding: 0 5px 2px 0; border-right: 0; color: #b5b5b5; }
    .sg { height: 83px; background: #535353; padding: 11px 0 0 11px; border-bottom: 1px solid #454545; color: #dcdcdc; }
    .search { display: flex; align-items: center; gap: 3px; }
    .input { width: 317px; height: 27px; background: #454545; border: 1px solid #686868; padding: 1px 0 0 6px; font-size: 15.500px; color: #8f8f8f; display: flex; align-items: center; }
    .recent { width: 339px; height: 23px; background: #4d4d4d; margin: 12px 0 0 -2px; display: flex; gap: 2.700px; }
    .sw { width: 20px; height: 20px; }
    .bw { background: linear-gradient(135deg, #000 32%, #fff 73%); }
    .tr { background: linear-gradient(135deg, #000 25%, rgba(0,0,0,.62) 26%, rgba(0,0,0,0) 68%), conic-gradient(#ccc 25%, #fff 0 50%, #ccc 0 75%, #fff 0) 0 0/10px 10px; }
    .gn { background: linear-gradient(135deg, #000 32%, #020e08 38%, #7d8682 56%, #fff 76%); }
    .ob { background: linear-gradient(135deg, #ea9518 42%, #00137a 70%); }
    .list { height: 452px; background: #424242; display: grid; grid-template-columns: 334px 22px; overflow: hidden; border-bottom: 1px solid #3b3b3b; }
    .rows { overflow: hidden; height: 451px; margin-left: 1px; }
    .row { height: 36.250px; border-bottom: 1.500px solid #484848; display: grid; grid-template-columns: 14px 30px auto; align-items: center; padding-left: 10.500px; font-size: 15.500px; color: #f0f0f0; }
    .row.open { border: 0; grid-template-columns: 16px 30.500px auto; padding: 0 0 1px 8.500px; }
    .row svg { color: #dadada; }
    .thumbs { height: 79.500px; background: #4d4d4d; display: flex; gap: 2px; padding: 2px 0 0 26px; }
    .thumbs div { width: 78px; height: 77px; }
    .bar { background: #4a4a4a; display: flex; flex-direction: column; align-items: center; color: #a5a5a5; padding: 10px 0 10px 3px; }
    .bar div { width: 14px; background: #696969; }
    .t1 { height: 309px; margin: 5px 0 auto; }
    .foot { height: 31px; background: #535353; display: grid; align-items: center; color: #dcdcdc; margin-top: 1px; }
    .f1 { grid-template-columns: 38px 36px 14px; padding: 0 0 1px 233px; margin-left: 0; }
    .dim { color: #8c8c8c; }
    .gap { height: 3px; }
    .prop { height: 37px; background: #535353; margin-bottom: 3px; }
    .lay { height: 36px; }
    .ctl { background: #535353; display: grid; align-items: center; font-size: 13px; color: #dcdcdc; }
    .kind { height: 38px; grid-template-columns: 124px 30px 31px 29px 31px 28px 12px; padding: 6px 0 0 4px; border-bottom: 1px solid #454545; }
    .norm { height: 35px; grid-template-columns: 170px 51px 64px; padding: 3px 0 0 4px; border-bottom: 1px solid #454545; }
    .lock { height: 39px; grid-template-columns: 41px 27px 27px 26px 30px 42px 24px 64px; padding: 0 0 2px 8px; }
    .sel { height: 24px; background: #454545; border: 1px solid #686868; border-radius: 3px; display: flex; align-items: center; color: #f0f0f0; padding: 0 4px 0 10px; }
    .sel svg:last-child { margin-left: auto; color: #c8c8c8; margin-top: 3px; }
    .s1 { width: 109px; gap: 5px; } .s2 { width: 162px; padding-left: 11px; }
    .num { width: 63px; height: 21px; background: #454545; border: 1px solid #686868; border-radius: 2px; display: grid; grid-template-columns: 43px 18px; color: #f0f0f0; align-items: center; padding-left: 0; margin-top: -1px; }
    .num fit-text { margin-left: 4px; }
    .num div { border-left: 1px solid #686868; height: 20px; padding: 9px 0 0 5px; }
    .tog { width: 11px; height: 22px; border-radius: 6px; background: #404040; margin-top: -1px; }
    .tog div { width: 11px; height: 11px; border-radius: 50%; background: #dcdcdc; }
    .layers { height: 107px; display: grid; grid-template-columns: 336px 20px; overflow: hidden; background: #535353; font-size: 13.500px; color: #f0f0f0; }
    .lrows { height: 107px; overflow: hidden; }
    .lr { display: grid; grid-template-columns: 38px 298px; height: 32px; border-bottom: 1.500px solid #4a4a4a; color: #dcdcdc; }
    .lr.s { height: 50px; }
    .eye { padding-left: 11px; display: flex; align-items: center; border-right: 1px solid #4a4a4a; }
    .lb { display: grid; grid-template-columns: 12px 34px auto; align-items: center; padding-left: 7px; color: #dcdcdc; }
    .lr.s .lb { background: #6a6a6a; grid-template-columns: 31px auto; padding-left: 2px; color: #eaeaea; }
    .lbar { background: #4a4a4a; display: flex; flex-direction: column; align-items: center; color: #a5a5a5; padding: 9px 0 9px 2px; }
    .lbar div { width: 14px; height: 18px; background: #696969; margin: 5px 0 auto; border-radius: 1px; }
    .f2 { grid-template-columns: 36px 33px 35px 33px 34px 34px 14px; padding: 0 0 0 102px; border-top: 1px solid #454545; height: 31px; margin: 0; }
  `];
  render() {
    const rows: [string, number][] = [["Blues", 35], ["Purples", 48], ["Pinks", 34], ["Reds", 32], ["Oranges", 55], ["Greens", 46], ["Grays", 38], ["Cloud", 37.5], ["Iridescent", 65.5]];
    const eye = ico(16, 11, svg`<path d="M.4 5.500Q8 -3.200 15.600 5.500 8 14.200 .4 5.500z" fill="currentColor" stroke="none"/><circle cx="8" cy="5.500" r="3.500" fill="#535353" stroke="none"/><circle cx="8" cy="5.500" r="2" fill="currentColor" stroke="none"/><circle cx="9" cy="4.600" r=".8" fill="#535353" stroke="none"/>`);
    return html`
      <div class="top">
        ${ico(7, 6, svg`<path d="M3 .5L.6 3 3 5.500M6.300 .5L3.900 3 6.300 5.500" stroke-width="1.300"/>`)}
        ${ico(7, 6, svg`<path d="M.6 .5L3 3 .6 5.500M3.900 .5L6.300 3 3.900 5.500" stroke-width="1.300"/>`)}
      </div>
      <div class="body">
        <div class="strip">
          <div class="icons">
            <div class="grip"></div>
            ${ico(22, 21, svg`<g transform="translate(2.500 0)"><rect x=".6" y=".6" width="4.800" height="4.800" stroke-width="1.100"/><rect x=".6" y="7.800" width="4.800" height="4.800" stroke-width="1.100"/><rect y="14.600" width="6" height="6" fill="currentColor" stroke="none"/><path d="M10 1.500H17.500L15 3.800Q19.500 8 17.400 12.600 15.600 17 11 18.800 15.400 15 15 10.600 14.700 7.800 12.800 6L10.600 8.500z" fill="currentColor" stroke="none"/></g>`)}
            ${ico(22, 19, svg`<path d="M4 .5H19Q21 .5 21 2.500V11Q21 13 19 13H11L6.500 18.500V13H4Q2 13 2 11V2.500Q2 .5 4 .5z" fill="currentColor" stroke="none"/>`)}
          </div>
          <div class="rest"></div>
        </div>
        <div class="panels">
          <div class="tabs">
            <div>${t(32, "Color")}</div><div>${t(54.5, "Swatches")}</div><div>${t(49.5, "Patterns")}</div><div class="on">${t(57, "Gradients")}</div><div class="fill">${menuIcon()}</div>
          </div>
          <div class="sg">
            <div class="search">
              ${ico(13, 13, svg`<circle cx="5.200" cy="5.200" r="4.300" stroke-width="1.500"/><path d="M8.400 8.400L12.200 12.300" stroke-width="2.400"/>`)}
              <div class="input">${t(110, "Search Gradients")}</div>
            </div>
            <div class="recent"><div class="sw bw"></div><div class="sw tr"></div><div class="sw gn"></div><div class="sw ob"></div></div>
          </div>
          <div class="list">
            <div class="rows">
              <div class="row open">
                ${ico(11, 7, svg`<path d="M.8 .8L5.500 5.800 10.200 .8" stroke-width="1.200"/>`)}
                <span>${ico(18, 14, svg`<path d="M.7 13V.7H7.600L8.800 2.600H17.300V7" stroke-width="1.300"/><rect y="6" width="18" height="8" rx="1" fill="currentColor" stroke="none"/>`)}</span>
                ${t(41, "Basics")}
              </div>
              <div class="thumbs"><div class="bw"></div><div class="tr"></div><div class="gn"></div></div>
              ${rows.map(([s, w]) => html`<div class="row">${chevRight()}${folder()}${t(w, s)}</div>`)}
            </div>
            <div class="bar">${chevUp()}<div class="t1"></div>${chevDown()}</div>
          </div>
          <div class="foot f1">${folder(15, 12)}${plusBox()}${trash("dim")}</div>
          <div class="gap"></div>
          <div class="prop"><div class="tabs">
            <div class="on">${t(61, "Properties")}</div><div>${t(74.5, "Adjustments")}</div><div>${t(51, "Libraries")}</div><div class="fill">${menuIcon()}</div>
          </div></div>
          <div class="tabs lay">
            <div class="on">${t(37.5, "Layers")}</div><div>${t(53.500, "Channels")}</div><div>${t(32.500, "Paths")}</div><div class="fill">${menuIcon()}</div>
          </div>
          <div class="ctl kind">
            <div class="sel s1">${ico(12, 12, svg`<circle cx="5" cy="5" r="4.200" stroke-width="1.300"/><path d="M8 8L11.500 11.500" stroke-width="2.200"/>`)}${t(24.500, "Kind")}${chevDown()}</div>
            ${ico(16, 13, svg`<rect x=".7" y=".7" width="14.400" height="11.200" stroke-width="1.300"/><path d="M2.600 10.400V8L5.500 4.500 8 8 10.500 5.500 13.200 9V10.400z" fill="currentColor" stroke="none"/>`)}
            ${half()}
            ${ico(13, 13, svg`<text x="6.500" y="12.400" text-anchor="middle" font-family="DejaVu Serif, serif" font-size="17" textLength="12.500" lengthAdjust="spacingAndGlyphs" fill="currentColor" stroke="currentColor" stroke-width=".6">T</text>`)}
            ${frameIcon(15)}
            ${ico(14, 15, svg`<path d="M4.500 6V.8H9L12.800 4.500V12.800H8" stroke-width="1.300"/><path d="M9 .8V4.600H12.800" stroke-width="1.100"/><rect y="7" width="8" height="7.600" fill="currentColor" stroke="none"/>`)}
            <div class="tog"><div></div></div>
          </div>
          <div class="ctl norm">
            <div class="sel s2">${t(40.500, "Normal")}${chevDown()}</div>
            ${t(46, "Opacity:")}
            <div class="num">${t(19, "0%")}<div>${chevDown()}</div></div>
          </div>
          <div class="ctl lock">
            ${t(29, "Lock:")}
            ${ico(14, 14, svg`<rect width="14" height="14" fill="#9a9a9a" stroke="none"/><path d="M2 2h3v3h-3zM8.500 2h3v3h-3zM5.200 5.300h3v3h-3zM2 8.600h3v3h-3zM8.500 8.600h3v3h-3z" fill="#4a4a4a" stroke="none"/>`)}
            <span class="dim">${smallBrush()}</span>
            ${moveIcon(16)}
            ${ico(17, 15, svg`<path d="M0 3H12M3.200 1V13.500M0 12H16M13.800 8V14" stroke-width="1.300"/><path d="M10.500 3L13.800 6.300V9M12.500 2.500L16 0M15.500 3v3" stroke-width="1.200"/>`)}
            ${ico(13, 15, svg`<rect y="6" width="13" height="9" rx="1" fill="currentColor" stroke="none"/><path d="M2.800 7V4.500A3.700 3.700 0 0 1 10.200 4.500V7" stroke-width="1.700"/><circle cx="6.500" cy="10.300" r="1.300" fill="#535353" stroke="none"/>`)}
            ${t(19, "Fill:")}
            <div class="num">${t(33, "100%")}<div>${chevDown()}</div></div>
          </div>
          <div class="layers">
            <div class="lrows">
              <div class="lr s"><div class="eye">${eye}</div><div class="lb">
                ${ico(21, 45, svg`<rect x="3" y="4" width="14.500" height="20" fill="#e4e4e4" stroke="none"/><path d="M3 8h3v4h-3zM3 16h3v4h-3zM15 4h2.500v4h-2.500zM15 12h2.500v4h-2.500z" fill="#bbb" stroke="none"/><path d="M7.400 4V24M10.900 4V24M14.200 4V24" stroke="#fb0000" stroke-width="2.200"/><path d="M2.600 24.300H18" stroke="#222"/><path d="M2.300 15V2.600H7" stroke="#222" stroke-width=".8"/><path d="M.8 15V.8H8M13 .8H20.200V15M.8 30V44.200H8M13 44.200H20.200V30" stroke="#fff" stroke-width="1.300"/><path d="M6.500 28.500H14.500M6.500 38.500H14.500M5.500 30V37M15.700 30V37" stroke-width="1.200"/><path d="M4 27h3v3h-3zM14 27h3v3h-3zM4 37h3v3h-3zM14 37h3v3h-3z"/><path d="M3 42H18" stroke="#333"/>`)}
                ${t(61, "12 Col Grid")}</div></div>
              <div class="lr"><div class="eye">${eye}</div><div class="lb">${chevRight()}${folder()}${t(40, "Navbar")}</div></div>
              <div class="lr"><div class="eye">${eye}</div><div class="lb">${chevRight()}${folder()}${t(41, "Header")}</div></div>
            </div>
            <div class="lbar">${chevUp()}<div></div>${chevDown()}</div>
          </div>
          <div class="foot f2">
            ${ico(18, 9, svg`<path d="M7 1.500H4Q1 1.500 1 4.500T4 7.500H7M11 1.500H14Q17 1.500 17 4.500T14 7.500H11M5 4.500H13" stroke-width="1.600"/>`, "dim")}
            ${ico(19, 18, svg`<text x="0" y="13" font-size="17" font-family="Lato, sans-serif" font-style="italic" textLength="14" lengthAdjust="spacingAndGlyphs" fill="currentColor" stroke="none">fx</text><path d="M14.500 16.500h4l-2 2z" fill="#fff" stroke="none"/>`)}
            ${ico(16, 12, svg`<rect width="16" height="12" rx="1" fill="currentColor" stroke="none"/><circle cx="8" cy="6" r="3.700" fill="#535353" stroke="none"/>`)}
            ${ico(19, 15, svg`<circle cx="7" cy="7.500" r="6.200" stroke-width="1.300"/><path d="M11.500 3A6.400 6.400 0 0 0 2.500 12z" fill="currentColor" stroke="none"/><path d="M14.500 15.500h4l-2 2z" fill="#fff" stroke="none"/>`)}
            ${folder(15, 12)}${plusBox()}${trash()}
          </div>
        </div>
      </div>`;
  }
}

/* ---------- taskbar ---------- */

@customElement("task-bar")
export class TaskBar extends LitElement {
  static styles = [base, css`
    :host { height: 59px; background: #1c1c1c; display: flex; justify-content: space-between; }
    .apps { display: grid; grid-template-columns: 46px 290px 57px 53px 45px 66px 40px; align-items: center; padding-left: 667px; height: 58px; }
    .search { width: 275px; height: 40px; border-radius: 20px; background: #3a3a3a; border: 1px solid #4a4a4a; display: grid; grid-template-columns: 31px 167px auto; align-items: center; padding-left: 14px; font-size: 16.500px; color: #d5d5d5; }
    .cell { width: 50px; height: 51px; background: #292929; border: 1px solid #333; border-radius: 5px; display: flex; flex-direction: column; align-items: center; padding-top: 10px; justify-content: space-between; }
    .cell i { width: 20px; height: 4px; border-radius: 2px; background: #4cc2ff; }
    .obs { height: 51px; display: flex; flex-direction: column; justify-content: space-between; align-items: flex-start; padding-top: 5px; }
    .obs i { width: 8px; height: 4px; border-radius: 2px; background: #9a9a9a; margin-left: 10px; }
    .tray { display: grid; grid-template-columns: 40px 41px 51px 30px 30px 33px 96px 43px; align-items: center; color: #f5f5f5; height: 58px; }
    .eng { font-size: 15px; }
    .clock { display: flex; flex-direction: column; align-items: flex-end; font-size: 14.500px; width: 84.500px; margin-top: -3px; }
    .clock fit-text { line-height: 20px; }
  `];
  render() {
    return html`
      <div class="apps">
        ${ico(29, 29, svg`<defs><linearGradient id="w" x1="0" y1="0" x2="29" y2="29" gradientUnits="userSpaceOnUse"><stop stop-color="#8ce4ff"/><stop offset="1" stop-color="#1296f5"/></linearGradient></defs><path d="M0 0H13.800V13.800H0zM15.200 0H29V13.800H15.200zM0 15.200H13.800V29H0zM15.200 15.200H29V29H15.200z" fill="url(#w)" stroke="none"/>`)}
        <div class="search">
          ${ico(19, 19, svg`<circle cx="8" cy="8" r="6.800" stroke="#f0f0f0" stroke-width="1.800" fill="#505050"/><path d="M13 13L18 18" stroke="#f0f0f0" stroke-width="2.400"/>`)}
          ${t(51, "Search")}
          ${ico(49, 28, svg`<path d="M.5 26Q7 17 10 9 12 4 14 7L15.500 10Q11 20 5.500 27.500L3.500 24.500z" fill="#4ea516" stroke="none"/><path d="M3 5Q6 0 11 .5 15 1.500 15 5.500 14.500 9 12 13L9.800 10Q12.500 5.500 9.500 4 6.500 4.500 8 9 11 15 19 23.500L15.500 27.500Q4.500 14.500 3 5z" fill="#6cc424" stroke="none"/><path d="M15.500 27.500L19 23.500Q25 26.500 33 23.500 41 20 49 25L45 25.500 47 27.500Q40 24.500 34 27 24 30 15.500 27.500z" fill="#5cb31b" stroke="none"/><circle cx="29.500" cy="13" r="11" fill="#8aa5ee" stroke="none"/><path d="M23 5Q29 1 33 4L31 7 28 8 29.500 11H34L33.500 16 30 21 28 16 23 12.500 21.500 8zM35.500 6.500l3 4v5l-3.500-4z" fill="#1d7a32" stroke="none"/>`)}
        </div>
        ${ico(30, 30, svg`<ellipse cx="15" cy="16.500" rx="15" ry="13" fill="#e53935" stroke="none"/><path d="M15 0V5M8 5Q12 3 15 5 18 3 22 5M11 7.500L15 5 19 7.500" stroke="#2e9e38" stroke-width="2.200"/><path d="M3 19Q4 23 8 25.500" stroke="#fff" stroke-width="2"/>`)}
        ${ico(26, 26, svg`<defs><linearGradient id="tg" x2="0" y2="1"><stop stop-color="#2fa9e3"/><stop offset="1" stop-color="#1180bd"/></linearGradient></defs><circle cx="13" cy="13" r="13" fill="url(#tg)" stroke="none"/><path d="M5 12.800L20 7 17.600 19.600 12.600 16 10.400 18.400 10 14.800z" fill="#fff" stroke="none"/><path d="M10 14.800L17 9.500 12 15.600z" fill="#b9d9ec" stroke="none"/>`)}
        ${ico(30, 30, svg`<rect width="30" height="30" rx="6" fill="#0b0b0b" stroke="none"/><g transform="translate(3.800 3.800) scale(.935)" fill="#ececec" stroke="none"><path d="M22.282 9.821a5.985 5.985 0 0 0-.516-4.910 6.046 6.046 0 0 0-6.510-2.900A6.065 6.065 0 0 0 4.981 4.182a5.985 5.985 0 0 0-3.998 2.900 6.046 6.046 0 0 0 .743 7.097 5.980 5.980 0 0 0 .511 4.911 6.051 6.051 0 0 0 6.515 2.900A5.985 5.985 0 0 0 13.260 24a6.056 6.056 0 0 0 5.772-4.206 5.990 5.990 0 0 0 3.998-2.900 6.056 6.056 0 0 0-.747-7.073zM13.260 22.430a4.476 4.476 0 0 1-2.876-1.040l.142-.081 4.778-2.758a.795.795 0 0 0 .393-.681v-6.737l2.020 1.169a.071.071 0 0 1 .038.052v5.583a4.504 4.504 0 0 1-4.495 4.494zM3.600 18.304a4.471 4.471 0 0 1-.535-3.014l.142.085 4.783 2.759a.771.771 0 0 0 .780 0l5.843-3.369v2.332a.080.080 0 0 1-.033.062L9.740 19.950a4.499 4.499 0 0 1-6.140-1.646zM2.341 7.896a4.485 4.485 0 0 1 2.365-1.973V11.600a.766.766 0 0 0 .388.677l5.815 3.354-2.020 1.169a.076.076 0 0 1-.071 0l-4.830-2.787A4.504 4.504 0 0 1 2.341 7.872zm16.596 3.856l-5.833-3.388L15.120 7.200a.076.076 0 0 1 .071 0l4.830 2.792a4.494 4.494 0 0 1-.677 8.104v-5.678a.790.790 0 0 0-.407-.666zm2.010-3.024l-.142-.085-4.773-2.782a.776.776 0 0 0-.785 0L9.409 9.230V6.897a.066.066 0 0 1 .028-.062l4.830-2.786a4.499 4.499 0 0 1 6.680 4.660zM8.306 12.863l-2.020-1.164a.080.080 0 0 1-.038-.057V6.075a4.499 4.499 0 0 1 7.376-3.454l-.142.081L8.704 5.460a.795.795 0 0 0-.393.681zm1.098-2.365l2.602-1.500 2.607 1.500v2.999l-2.598 1.500-2.606-1.500z"/></g>`)}
        <div class="cell">
          ${ico(28, 27, svg`<rect width="28" height="27" rx="4.500" fill="#001e36" stroke="none"/><text x="14" y="17.800" text-anchor="middle" font-size="15" font-weight="700" textLength="18" lengthAdjust="spacingAndGlyphs" fill="#31a8ff" stroke="none">Ps</text>`)}
          <i></i>
        </div>
        <div class="obs">
          ${ico(33, 34, svg`<circle cx="14" cy="19.500" r="13" fill="#211f22" stroke="#d8d8d8" stroke-width="1.700"/><g stroke="#d0d0d0" stroke-width="1.600">${[0, 120, 240].map((a) => svg`<path transform="rotate(${a} 14 19.500)" d="M14 19.500Q9.500 18 9.500 14 9.700 10 13 8.500"/>`)}</g><circle cx="24.500" cy="8" r="7.500" fill="#f00" stroke="none"/>`)}
          <i></i>
        </div>
      </div>
      <div class="tray">
        ${ico(14, 8, svg`<path d="M1 7L7 1.500 13 7" stroke-width="1.900"/>`)}
        ${ico(14, 20, svg`<g stroke="#6fc7e0" stroke-width="1.500"><rect x="4" y=".8" width="6" height="12" rx="3"/><path d="M.8 9.500Q1 15.500 7 15.500T13.200 9.500M7 15.500V20"/></g>`)}
        ${t(28.500, "ENG", "eng")}
        ${ico(21, 21, svg`<g stroke-width="1.300"><circle cx="10" cy="10" r="9.200"/><ellipse cx="10" cy="10" rx="4.200" ry="9.200"/><path d="M1.500 6.500H18.500M1.500 13.500H11"/></g><circle cx="14.800" cy="14.500" r="5.300" fill="#1c1c1c" stroke-width="1.400"/><path d="M11.500 18L18 11" stroke-width="1.300"/>`)}
        ${ico(21, 18, svg`<g stroke-width="1.400"><path d="M.8 6H4.500L9 1.800V16.200L4.500 12H.8z"/><path d="M11.500 6Q13.500 9 11.500 12M14.200 4Q17.500 9 14.200 14M16.800 1.800Q21.800 9 16.800 16.200"/></g>`)}
        ${ico(20, 14, svg`<rect x=".8" y=".8" width="16" height="12.400" rx="3" stroke-width="1.500"/><path d="M18.500 4.500V9.500" stroke-width="2"/><rect x="3" y="3" width="4" height="8" fill="currentColor" stroke="none"/>`)}
        <div class="clock">${t(55, "7:16 AM")}${t(77, "10/10/2024")}</div>
        ${ico(19, 20, svg`<path d="M9 2.500Q3 2.500 3 9V13L1 16H15.500L14.500 13.500" stroke-width="1.400"/><path d="M6 18Q8 20.200 10.500 18" stroke-width="1.500"/><path d="M12 1.500H16.500L12 6.800H16.800M7 6.500H10.500L7 11.500H11" stroke-width="1.500"/>`)}
      </div>`;
  }
}

/* ---------- page ---------- */

@customElement("app-root")
export class AppRoot extends LitElement {
  static styles = [base, css`
    :host { display: flex; flex-direction: column; width: 1920px; height: 1080px; overflow: hidden; position: relative; background: #1c1c1c; }
    .work { display: flex; height: 947px; flex: none; }
    menu-bar, options-bar, task-bar { flex: none; }
    tool-box { position: absolute; left: 1px; top: 75px; }
    .cursor { position: absolute; left: 1206px; top: 1054px; }
  `];
  render() {
    return html`
      <menu-bar></menu-bar>
      <options-bar></options-bar>
      <div class="work"><doc-area></doc-area><side-dock></side-dock></div>
      <task-bar></task-bar>
      <tool-box></tool-box>
      ${ico(12, 19, svg`<path d="M.7 1V14.500L3.800 12 6.200 17.500 9 16.300 6.600 11H11z" fill="#ffc20e" stroke="#000" stroke-width="1"/>`, "cursor")}`;
  }
}
